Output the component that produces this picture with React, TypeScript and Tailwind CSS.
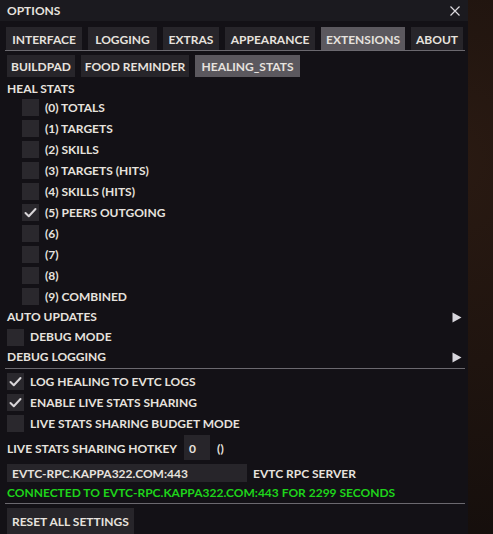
import React from "react";

const font = { fontFamily: "Lato, 'Noto Sans', sans-serif" };

function Check({ checked }: { checked?: boolean }) {
  return (
    <div className="w-[17px] h-[17px] bg-[#2a282d] flex items-center justify-center shrink-0">
      {checked && (
        <svg width="13" height="11" viewBox="0 0 13 11">
          <path d="M1.5 6 L4.8 9.2 L11.5 2" stroke="#d9d6d9" strokeWidth="2" fill="none" strokeLinecap="round" strokeLinejoin="round" />
        </svg>
      )}
    </div>
  );
}

function Tab({ label, active, w }: { label: string; active?: boolean; w: string }) {
  return (
    <div className={`${w} pt-[2px] flex items-center justify-center whitespace-nowrap ${active ? "bg-[#5b585e]" : "bg-[#27252a]"}`}>{label}</div>
  );
}

function Arrow() {
  return (
    <svg width="10" height="11" viewBox="0 0 10 11">
      <path d="M0.5 0.5 L9.5 5.5 L0.5 10.5 Z" fill="#d8d6dc" />
    </svg>
  );
}

export default function App() {
  const stats = [
    ["(0) TOTALS", false],
    ["(1) TARGETS", false],
    ["(2) SKILLS", false],
    ["(3) TARGETS (HITS)", false],
    ["(4) SKILLS (HITS)", false],
    ["(5) PEERS OUTGOING", true],
    ["(6)", false],
    ["(7)", false],
    ["(8)", false],
    ["(9) COMBINED", false],
  ] as [string, boolean][];
  return (
    <div
      className="w-[493px] h-[534px] overflow-hidden flex text-[#e6e2de] text-[12px] font-bold leading-none bg-[radial-gradient(circle_at_90%_30%,#2a1a12,#140e0c_70%)]"
      style={font}
    >
      <div className="w-[468px] h-full bg-[#131116] flex flex-col">
        <div className="h-[23px] bg-[#1b1a1f] flex items-center justify-between pl-[7px] pr-[8px]">
          <span>OPTIONS</span>
          <svg width="10" height="10" viewBox="0 0 10 10">
            <path d="M0.5 0.5 L9.5 9.5 M9.5 0.5 L0.5 9.5" stroke="#dcdadf" strokeWidth="1.2" />
          </svg>
        </div>
        <div className="px-[5px] flex flex-col">
          <div className="mt-[6px] ml-[1px] h-[23px] flex gap-[6px]">
            <Tab label="INTERFACE" w="w-[76px]" />
            <Tab label="LOGGING" w="w-[69px]" />
            <Tab label="EXTRAS" w="w-[56px]" />
            <Tab label="APPEARANCE" w="w-[90px]" />
            <Tab label="EXTENSIONS" w="w-[84px]" active />
            <Tab label="ABOUT" w="w-[52px]" />
          </div>
          <div className="h-px bg-[#6b696f] w-[460px]" />
          <div className="mt-[4px] ml-[2px] h-[22px] flex gap-[6px]">
            <Tab label="BUILDPAD" w="w-[68px]" />
            <Tab label="FOOD REMINDER" w="w-[108px]" />
            <Tab label="HEALING_STATS" w="w-[105px]" active />
          </div>
          <div className="h-[20px] pt-[4px] flex items-center pl-[2px]">HEAL STATS</div>
          {stats.map(([label, c]) => (
            <div key={label} className="h-[21px] flex items-center pl-[17px] gap-[6px]">
              <Check checked={c} />
              <span>{label}</span>
            </div>
          ))}
          <div className="h-[20px] flex items-center justify-between pl-[2px] pr-[1px]">
            <span>AUTO UPDATES</span>
            <Arrow />
          </div>
          <div className="h-[20px] flex items-center pl-[2px] gap-[6px]">
            <Check />
            <span>DEBUG MODE</span>
          </div>
          <div className="h-[20px] flex items-center justify-between pl-[2px] pr-[1px]">
            <span>DEBUG LOGGING</span>
            <Arrow />
          </div>
          <div className="h-px bg-[#6b696f] w-[460px] mt-[1px]" />
          <div className="h-[21px] mt-[2px] flex items-center pl-[2px] gap-[6px]">
            <Check checked />
            <span>LOG HEALING TO EVTC LOGS</span>
          </div>
          <div className="h-[21px] flex items-center pl-[2px] gap-[6px]">
            <Check checked />
            <span>ENABLE LIVE STATS SHARING</span>
          </div>
          <div className="h-[21px] flex items-center pl-[2px] gap-[6px]">
            <Check />
            <span>LIVE STATS SHARING BUDGET MODE</span>
          </div>
          <div className="h-[25px] mt-[1px] flex items-center pl-[2px]">
            <span className="pt-[2px]">LIVE STATS SHARING HOTKEY</span>
            <div className="ml-[7px] w-[26px] h-[25px] pt-[2px] bg-[#27252a] flex items-center pl-[5px]">0</div>
            <span className="ml-[7px] pt-[2px]">()</span>
          </div>
          <div className="h-[18px] mt-[4px] flex items-center pl-[2px]">
            <div className="w-[240px] h-[18px] pt-[1px] bg-[#27252a] flex items-center pl-[5px]">EVTC-RPC.KAPPA322.COM:443</div>
            <span className="ml-[6px] pt-[1px]">EVTC RPC SERVER</span>
          </div>
          <div className="h-[21px] flex items-center pl-[2px] text-[#1ed41a]">
            CONNECTED TO EVTC-RPC.KAPPA322.COM:443 FOR 2299 SECONDS
          </div>
          <div className="h-px bg-[#6b696f] w-[460px]" />
          <div className="mt-[4px] ml-[2px] h-[26px] w-fit px-[5px] pt-[2px] bg-[#27252a] flex items-center">RESET ALL SETTINGS</div>
        </div>
      </div>
    </div>
  );
}
